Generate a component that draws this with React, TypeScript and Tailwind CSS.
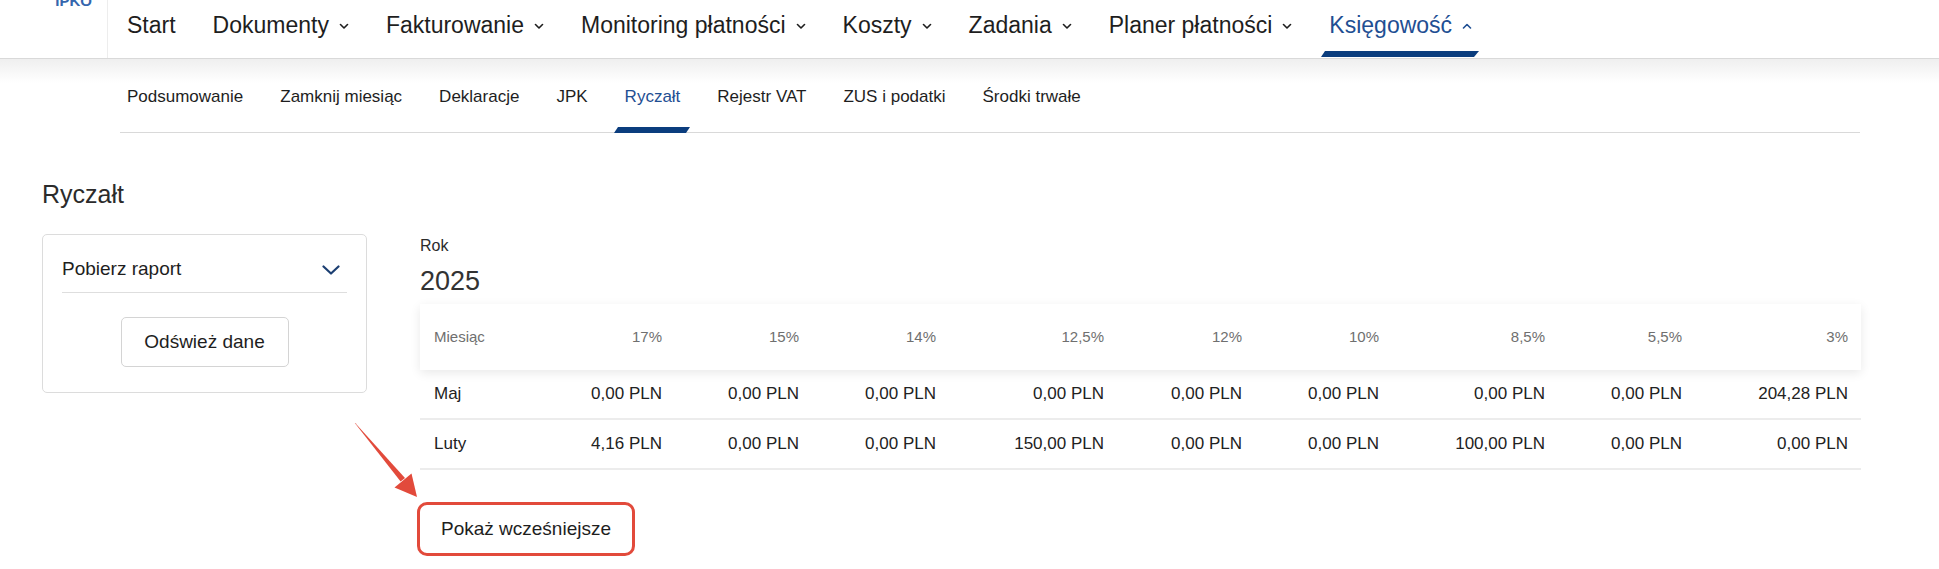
import React from "react";

const navItems: { label: string; chevron: boolean; active?: boolean }[] = [
  { label: "Start", chevron: false },
  { label: "Dokumenty", chevron: true },
  { label: "Fakturowanie", chevron: true },
  { label: "Monitoring płatności", chevron: true },
  { label: "Koszty", chevron: true },
  { label: "Zadania", chevron: true },
  { label: "Planer płatności", chevron: true },
  { label: "Księgowość", chevron: true, active: true },
];

const subItems = [
  "Podsumowanie",
  "Zamknij miesiąc",
  "Deklaracje",
  "JPK",
  "Ryczałt",
  "Rejestr VAT",
  "ZUS i podatki",
  "Środki trwałe",
];

const headers = ["Miesiąc", "17%", "15%", "14%", "12,5%", "12%", "10%", "8,5%", "5,5%", "3%"];
const rows = [
  ["Maj", "0,00 PLN", "0,00 PLN", "0,00 PLN", "0,00 PLN", "0,00 PLN", "0,00 PLN", "0,00 PLN", "0,00 PLN", "204,28 PLN"],
  ["Luty", "4,16 PLN", "0,00 PLN", "0,00 PLN", "150,00 PLN", "0,00 PLN", "0,00 PLN", "100,00 PLN", "0,00 PLN", "0,00 PLN"],
];

const gridCols =
  "grid grid-cols-[118px_137px_137px_137px_168px_138px_137px_166px_137px_166px]";

function SmallChevron({ up }: { up?: boolean }) {
  return (
    <svg width="10" height="6" viewBox="0 0 10 6" className="ml-[10px] mt-[2px]">
      <path
        d={up ? "M1.5 5 L5 1.5 L8.5 5" : "M1.5 1.5 L5 5 L8.5 1.5"}
        fill="none"
        stroke="currentColor"
        strokeWidth="1.6"
        strokeLinecap="round"
        strokeLinejoin="round"
      />
    </svg>
  );
}

export default function App() {
  return (
    <div className="relative w-[1939px] h-[569px] overflow-hidden bg-white font-['Liberation_Sans',Arial,sans-serif] text-[#1e1e1e]">
      {/* Top navigation */}
      <div className="flex h-[59px] border-b border-[#d9d9d9]">
        <div className="w-[108px] border-r border-[#ededed] flex justify-end pr-[15px]">
          <span className="-mt-[7px] text-[15px] font-bold leading-[16px] text-[#3566ad]">IPKO</span>
        </div>
        <div className="flex h-full pl-[19px] gap-[37px]">
          {navItems.map((n) => (
            <div
              key={n.label}
              className={`relative flex items-center h-full text-[23px] pb-[8px] ${
                n.active ? "text-[#1f4f93]" : "text-[#1e1e1e]"
              }`}
            >
              <span>{n.label}</span>
              {n.chevron && <SmallChevron up={n.active} />}
              {n.active && (
                <svg
                  className="absolute left-[-8px] bottom-[1px]"
                  width="158"
                  height="6"
                  viewBox="0 0 158 6"
                >
                  <polygon points="4,0 158,0 153,6 0,6" fill="#0b3d7e" />
                </svg>
              )}
            </div>
          ))}
        </div>
      </div>

      {/* Sub navigation */}
      <div className="bg-[linear-gradient(to_bottom,#efefef_0px,#ffffff_24px)]">
        <div className="ml-[120px] w-[1740px] h-[74px] border-b border-[#d9d9d9] flex items-center pl-[7px] gap-[37px] pt-[2px]">
          {subItems.map((s) => (
            <div
              key={s}
              className={`relative flex items-center h-full text-[17px] ${
                s === "Ryczałt" ? "text-[#1f4f93]" : "text-[#1e1e1e]"
              }`}
            >
              <span>{s}</span>
              {s === "Ryczałt" && (
                <svg
                  className="absolute left-[-11px] bottom-[-1px]"
                  width="76"
                  height="6"
                  viewBox="0 0 76 6"
                >
                  <polygon points="4,0 76,0 72,6 0,6" fill="#0b3d7e" />
                </svg>
              )}
            </div>
          ))}
        </div>
      </div>

      {/* Content */}
      <div className="px-[42px] pt-[47px]">
        <h1 className="text-[25px] leading-[28px] text-[#2b2b2b]">Ryczałt</h1>
        <div className="flex items-start mt-[26px] gap-[53px]">
          {/* Card */}
          <div className="w-[325px] h-[159px] border border-[#dcdcdc] rounded-[5px] px-[19px]">
            <div className="h-[58px] pt-[11px] flex items-center justify-between border-b border-[#dedede]">
              <span className="text-[19px] text-[#1e1e1e]">Pobierz raport</span>
              <svg width="18" height="10" viewBox="0 0 18 10" className="mr-[7px] mt-[2px]">
                <path
                  d="M1.5 1.5 L9 8.5 L16.5 1.5"
                  fill="none"
                  stroke="#1c3f72"
                  strokeWidth="2.2"
                  strokeLinecap="round"
                  strokeLinejoin="round"
                />
              </svg>
            </div>
            <div className="flex justify-center mt-[24px]">
              <button className="w-[168px] h-[50px] border border-[#d4d4d4] rounded-[5px] text-[19px] text-[#1e1e1e] bg-white">
                Odśwież dane
              </button>
            </div>
          </div>

          {/* Right section */}
          <div className="flex flex-col pt-[2px]">
            <div className="text-[16px] leading-[20px] text-[#2b2b2b]">Rok</div>
            <div className="mt-[9px] text-[27px] leading-[32px] text-[#333333]">2025</div>
            <div className="mt-[7px] w-[1441px]">
              <div
                className={`${gridCols} h-[66px] items-center bg-white relative z-10 shadow-[0_3px_10px_rgba(0,0,0,0.09)] text-[15px] text-[#6f6f6f]`}
              >
                {headers.map((h, i) => (
                  <div key={h} className={i === 0 ? "pl-[14px]" : "text-right pr-[13px]"}>
                    {h}
                  </div>
                ))}
              </div>
              {rows.map((r) => (
                <div
                  key={r[0]}
                  className={`${gridCols} h-[50px] items-center border-b-2 border-[#ececec] text-[17px] text-[#222222]`}
                >
                  {r.map((c, i) => (
                    <div key={i} className={i === 0 ? "pl-[14px]" : "text-right pr-[13px]"}>
                      {c}
                    </div>
                  ))}
                </div>
              ))}
              <button className="mt-[32px] -ml-[3px] w-[218px] h-[54px] border-[3px] border-[#e24a3b] rounded-[10px] text-[19px] text-[#1e1e1e] bg-white">
                Pokaż wcześniejsze
              </button>
            </div>
          </div>
        </div>
      </div>

      {/* Annotation arrow */}
      <svg
        className="absolute left-0 top-0 pointer-events-none"
        width="1939"
        height="569"
        viewBox="0 0 1939 569"
      >
        <polygon points="354.6,422.7 355.4,423.3 405,478 400.6,481.6" fill="#e24a3b" />
        <polygon points="417,497 394.5,487.5 411.5,473.5" fill="#e24a3b" />
      </svg>
    </div>
  );
}
